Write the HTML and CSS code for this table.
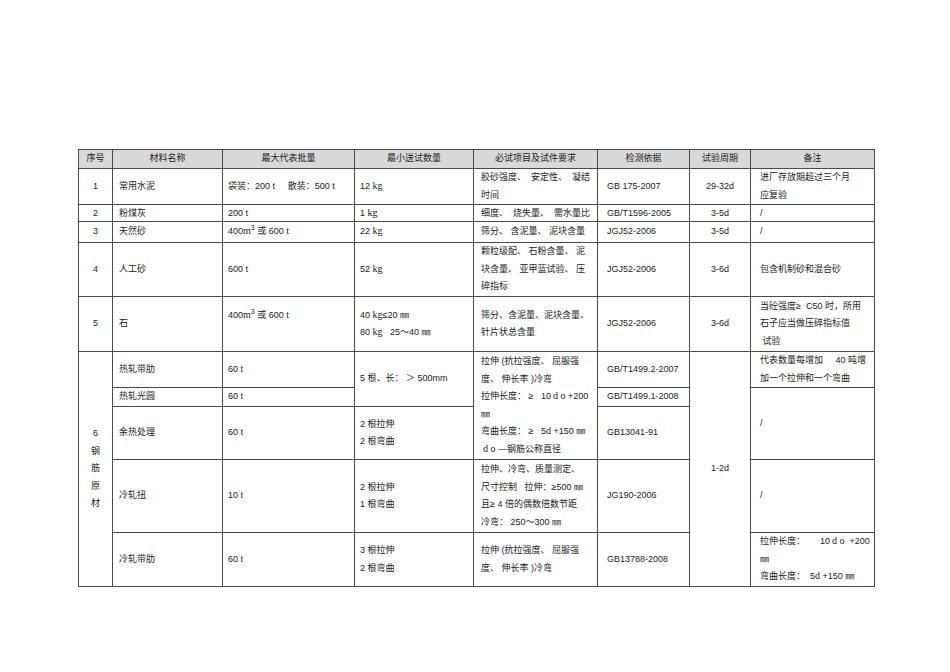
FILE: index.html
```html
<!DOCTYPE html>
<html lang="zh-CN">
<head>
<meta charset="utf-8">
<title>材料送检表</title>
<link rel="stylesheet" href="styles.css">
</head>
<body>
<div class="page">
<table class="grid">
  <colgroup>
    <col class="c1"><col class="c2"><col class="c3"><col class="c4"><col class="c5"><col class="c6"><col class="c7"><col class="c8">
  </colgroup>
  <thead>
    <tr class="h19">
      <th>序号</th><th>材料名称</th><th>最大代表批量</th><th>最小送试数量</th><th>必试项目及试件要求</th><th>检测依据</th><th>试验周期</th><th>备注</th>
    </tr>
  </thead>
  <tbody>
    <tr class="h36">
      <td class="ctr">1</td>
      <td>常用水泥</td>
      <td class="p5">袋装：200 <span class="u">t</span>&nbsp;&nbsp;&nbsp;&nbsp;&nbsp;散装：500 <span class="u">t</span></td>
      <td class="p5">12 <span class="u">kg</span></td>
      <td class="req">胶砂强度、&nbsp; 安定性、&nbsp; 凝结<br>时间</td>
      <td class="std">GB 175-2007</td>
      <td class="ctr">29-32d</td>
      <td class="note">进厂存放期超过三个月<br>应复验</td>
    </tr>
    <tr class="h17">
      <td class="ctr">2</td>
      <td>粉煤灰</td>
      <td class="p5">200 <span class="u">t</span></td>
      <td class="p5">1 <span class="u">kg</span></td>
      <td class="req">细度、&nbsp; 烧失量、&nbsp; 需水量比</td>
      <td class="std">GB/T1596-2005</td>
      <td class="ctr">3-5d</td>
      <td class="note">/</td>
    </tr>
    <tr class="h21">
      <td class="ctr">3</td>
      <td>天然砂</td>
      <td class="p5">400<span class="u">m</span><sup>3</sup> 或 600 <span class="u">t</span></td>
      <td class="p5">22 <span class="u">kg</span></td>
      <td class="req">筛分、 含泥量、 泥块含量</td>
      <td class="std">JGJ52-2006</td>
      <td class="ctr">3-5d</td>
      <td class="note">/</td>
    </tr>
    <tr class="h54">
      <td class="ctr">4</td>
      <td>人工砂</td>
      <td class="p5">600 <span class="u">t</span></td>
      <td class="p5">52 <span class="u">kg</span></td>
      <td class="req">颗粒级配、 石粉含量、 泥<br>块含量、 亚甲蓝试验、 压<br>碎指标</td>
      <td class="std">JGJ52-2006</td>
      <td class="ctr">3-6d</td>
      <td class="note">包含机制砂和混合砂</td>
    </tr>
    <tr class="h55">
      <td class="ctr">5</td>
      <td>石</td>
      <td class="p5 raise">400<span class="u">m</span><sup>3</sup> 或 600 <span class="u">t</span></td>
      <td class="p5">40 <span class="u">kg</span>≤20 ㎜<br>80 <span class="u">kg</span>&nbsp;&nbsp;&nbsp;25～40 ㎜</td>
      <td class="req">筛分、含泥量、泥块含量、<br>针片状总含量</td>
      <td class="std">JGJ52-2006</td>
      <td class="ctr">3-6d</td>
      <td class="note">当砼强度≥&nbsp;&nbsp;C50 时，所用<br>石子应当做压碎指标值<br>&nbsp;试验</td>
    </tr>
    <tr class="h36">
      <td class="ctr" rowspan="5">6<br>钢<br>筋<br>原<br>材</td>
      <td>热轧带肋</td>
      <td class="p5">60 <span class="u">t</span></td>
      <td class="p5" rowspan="2">5 根、长：&nbsp;＞&nbsp;500mm</td>
      <td class="req" rowspan="3">拉伸 (抗拉强度、 屈服强<br>度、 伸长率 )冷弯<br>拉伸长度：&nbsp;≥&nbsp;&nbsp; 10<span class="u sp">do</span>+200<br>㎜<br>弯曲长度：&nbsp;≥&nbsp;&nbsp; 5<span class="u">d</span> +150 ㎜<br><span class="u sp">do</span>—钢筋公称直径</td>
      <td class="std">GB/T1499.2-2007</td>
      <td class="ctr" rowspan="5">1-2d</td>
      <td class="note">代表数量每增加&nbsp;&nbsp;&nbsp;&nbsp;&nbsp;40 吨增<br>加一个拉伸和一个弯曲</td>
    </tr>
    <tr class="h19">
      <td>热轧光圆</td>
      <td class="p5">60 <span class="u">t</span></td>
      <td class="std">GB/T1499.1-2008</td>
      <td class="note" rowspan="2">/</td>
    </tr>
    <tr class="h53">
      <td>余热处理</td>
      <td class="p5">60 <span class="u">t</span></td>
      <td class="p5">2 根拉伸<br>2 根弯曲</td>
      <td class="std">GB13041-91</td>
    </tr>
    <tr class="h73">
      <td>冷轧扭</td>
      <td class="p5">10 <span class="u">t</span></td>
      <td class="p5">2 根拉伸<br>1 根弯曲</td>
      <td class="req">拉伸、冷弯、质量测定、<br>尺寸控制&nbsp;&nbsp;&nbsp;拉伸：≥500 ㎜<br>且≥ 4 倍的偶数倍数节距<br>冷弯：&nbsp;250～300 ㎜</td>
      <td class="std">JG190-2006</td>
      <td class="note">/</td>
    </tr>
    <tr class="h54">
      <td>冷轧带肋</td>
      <td class="p5">60 <span class="u">t</span></td>
      <td class="p5">3 根拉伸<br>2 根弯曲</td>
      <td class="req">拉伸 (抗拉强度、 屈服强<br>度、 伸长率 )冷弯</td>
      <td class="std">GB13788-2008</td>
      <td class="note">拉伸长度：&nbsp;&nbsp;&nbsp;&nbsp;&nbsp;&nbsp;10<span class="u sp">do</span>&nbsp;+200<br>㎜<br>弯曲长度：&nbsp;&nbsp;5<span class="u">d</span> +150 ㎜</td>
    </tr>
  </tbody>
</table>
</div>
</body>
</html>
```

FILE: styles.css
```css
html, body {
  margin: 0;
  padding: 0;
  background: #ffffff;
}

.page {
  padding: 149px 0 0 78px;
}

.grid {
  border-collapse: collapse;
  table-layout: fixed;
  width: 796px;
  font-family: "Liberation Sans", "Noto Sans CJK SC", sans-serif;
  font-size: 9px;
  color: #222222;
}

.c1 { width: 34px; }
.c2 { width: 110px; }
.c3 { width: 132px; }
.c4 { width: 119px; }
.c5 { width: 124px; }
.c6 { width: 92px; }
.c7 { width: 61px; }
.c8 { width: 124px; }

.grid th,
.grid td {
  border: 1px solid #4a4a4a;
  padding: 0 0 0 6px;
  line-height: 17.5px;
  white-space: nowrap;
  overflow: hidden;
  vertical-align: middle;
  text-align: left;
}

.grid th {
  background: #d9d9d9;
  font-weight: normal;
  text-align: center;
  padding: 0;
}

.grid td.ctr {
  text-align: center;
  padding: 0;
}

.grid td.p5 { padding-left: 5px; }
.grid td.req { padding-left: 7px; }
.grid td.std { padding-left: 9px; }
.grid td.note { padding-left: 9px; }
.grid td.raise { padding-bottom: 17px; }

.h17 { height: 17px; }
.h19 { height: 19px; }
.h21 { height: 21px; }
.h36 { height: 36px; }
.h53 { height: 53px; }
.h54 { height: 54px; }
.h55 { height: 55px; }
.h73 { height: 73px; }

.grid .h17 td { line-height: 14px; }

.u {
  font-family: "Liberation Serif", "Noto Sans CJK SC", serif;
  font-size: 10px;
  line-height: 0;
}

.sp {
  letter-spacing: 2.5px;
  margin-left: 2px;
}

sup {
  font-size: 7px;
  line-height: 0;
  vertical-align: 4px;
}
```
